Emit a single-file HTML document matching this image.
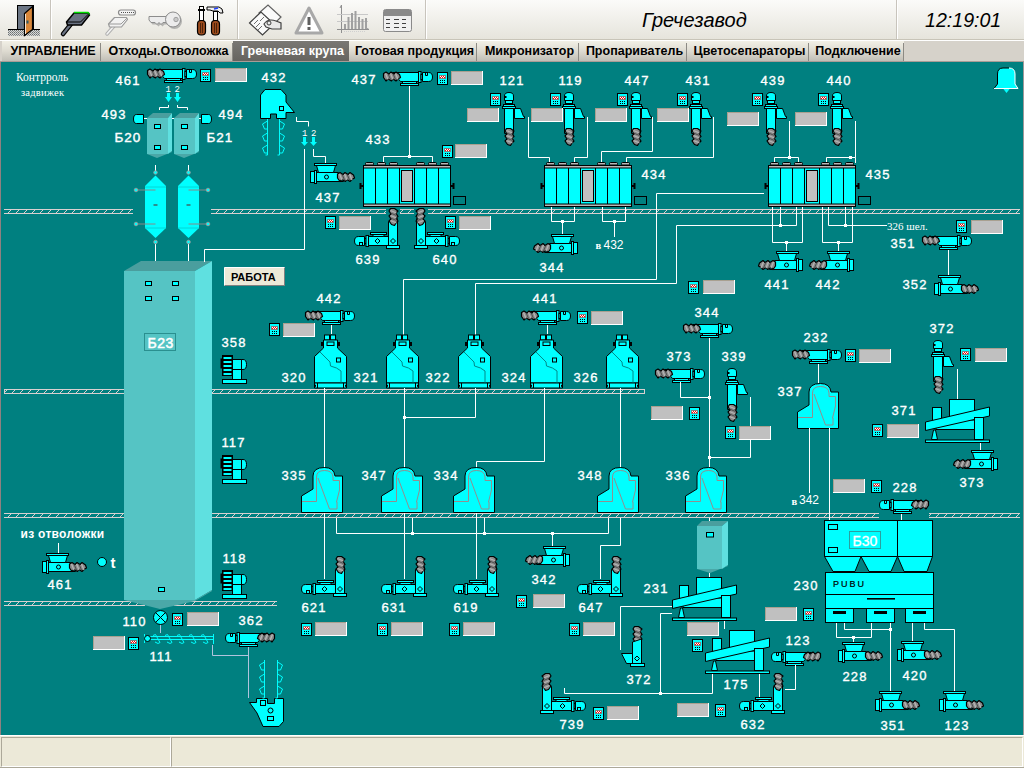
<!DOCTYPE html>
<html><head><meta charset="utf-8">
<style>
html,body{margin:0;padding:0;width:1024px;height:768px;overflow:hidden;background:#d4d0c8;}
#tb{position:absolute;left:0;top:0;width:1024px;height:39px;background:linear-gradient(#fbfbf9,#e6e4dc);}
#tbl{position:absolute;left:0;top:39px;width:1024px;height:1px;background:#c8c4b8;}
#tbl2{position:absolute;left:0;top:40px;width:1024px;height:1px;background:#fff;}
#title{position:absolute;left:642px;top:9px;font:italic 20px "Liberation Sans",sans-serif;color:#000;}
#clock{position:absolute;left:925px;top:8.5px;font:italic 19.6px "Liberation Sans",sans-serif;color:#000;}
#tabs{position:absolute;left:0;top:41px;width:1024px;height:21px;background:#d6d2ca;}
.tab{position:absolute;top:0;height:20px;background:linear-gradient(#f2f0e6,#dedbd1 50%,#c0beb6);box-sizing:border-box;padding-left:3px;
 font:bold 12.5px "Liberation Sans",sans-serif;color:#000;text-align:center;line-height:20px;white-space:nowrap;}
.tab::after{content:"";position:absolute;right:0;top:2px;width:1px;height:18px;background:#8c8a84;}
.tab.act{background:linear-gradient(#7a7874,#66645f);color:#fff;}
.tab.act::after{display:none;}
#main{position:absolute;left:1px;top:62px;width:1022px;height:673px;background:#008080;}
#lb{position:absolute;left:0;top:62px;width:1px;height:673px;background:#908080;}
#rb{position:absolute;left:1023px;top:62px;width:1px;height:673px;background:#a09898;}
#sb{position:absolute;left:0;top:735px;width:1024px;height:33px;background:#ece9d8;}
.pn{position:absolute;top:2px;height:30px;border-top:1px solid #aca899;border-left:1px solid #aca899;border-bottom:1px solid #fff;border-right:1px solid #fff;box-sizing:border-box;}

</style></head><body>
<div id="tb"></div><div id="tbl"></div><div id="tbl2"></div>

<svg width="1024" height="40" style="position:absolute;left:0;top:0">
 <defs>
  <pattern id="dither" width="2" height="2" patternUnits="userSpaceOnUse">
   <rect width="2" height="2" fill="#d8d8d8"/><rect width="1" height="1" fill="#6a7070"/><rect x="1" y="1" width="1" height="1" fill="#8a9090"/>
  </pattern>
 </defs>
 <!-- door -->
 <g shape-rendering="crispEdges">
  <rect x="8" y="29" width="32" height="7" fill="url(#dither)"/>
  <rect x="8" y="29" width="10" height="1" fill="#000"/><rect x="32" y="29" width="8" height="1" fill="#000"/>
  <rect x="17" y="5" width="17" height="25" fill="#000"/>
  <rect x="18" y="6" width="14" height="23" fill="#6b7584"/>
 </g>
 <path d="M24.5,13.5 L32.5,6.5 V29.5 L24.5,35.5 Z" fill="#d8873a" stroke="#000" stroke-width="1.2"/>
 <path d="M25.5,14 V34" stroke="#fff" stroke-width="0.8"/>
 <rect x="26.5" y="20.5" width="2" height="3" fill="#2a5a6a"/>
 <rect x="50" y="0" width="1" height="39" fill="#c8c4bc"/><rect x="51" y="0" width="1" height="39" fill="#fff"/>
 <!-- usb green -->
 <path d="M63,34 L71,24" stroke="#000" stroke-width="4.5" stroke-linecap="round"/>
 <path d="M63,34 L71,24" stroke="#6a7282" stroke-width="2.2" stroke-linecap="round"/>
 <path d="M66.5,22 L74,13 H88.5 L89.5,15 L81.5,25 H67.5 Z" fill="#6a7282" stroke="#000" stroke-width="1.5" stroke-linejoin="round"/>
 <path d="M74,12.5 H88 L89.5,14.5" stroke="#00e000" stroke-width="1.6" fill="none"/>
 <path d="M67,22 H80.5 L89,13.5" stroke="#000" stroke-width="1" fill="none"/>
 <!-- grey cable -->
 <path d="M107,34 L114,26" stroke="#b0b0b0" stroke-width="3.5" stroke-linecap="round"/>
 <path d="M107,34 L114,26" stroke="#f4f4f4" stroke-width="1.5" stroke-linecap="round"/>
 <path d="M108.5,24 L114.5,17.5 H126.5 L127.5,19.5 L121.5,27 H109.5 Z" fill="#f2f2f2" stroke="#9a9a9a" stroke-width="1.2" stroke-linejoin="round"/>
 <path d="M109,24 H121 L127,18" stroke="#9a9a9a" fill="none"/>
 <rect x="118.5" y="10" width="17" height="5" rx="2.5" fill="#f4f4f4" stroke="#8a8a8a" stroke-width="1.2"/>
 <path d="M121,12.5 h1 M123,12.5 h1 M125,12.5 h1 M127,12.5 h1 M129,12.5 h1 M131,12.5 h1 M133,12.5 h1" stroke="#505050"/>
 <!-- key -->
 <g transform="translate(1.5,2)" opacity="0.6">
  <path d="M149,16.5 H166 L168,14 V24 L166,22.5 H163 L161,24.5 L159,22.5 L157,24.5 L155,22.5 H151 L149,20 Z" fill="#909090"/>
  <circle cx="173" cy="19.5" r="7.5" fill="#909090"/>
 </g>
 <path d="M149,16.5 H166 L168,14 V24 L166,22.5 H163 L161,24.5 L159,22.5 L157,24.5 L155,22.5 H151 L149,20 Z" fill="#ececec" stroke="#8c8c8c"/>
 <circle cx="173" cy="19.5" r="7.5" fill="#ececec" stroke="#8c8c8c"/>
 <circle cx="176" cy="19.5" r="2.2" fill="#c8c8c8" stroke="#a0a0a0"/>
 <!-- tools -->
 <rect x="199.5" y="6.5" width="4" height="14" fill="#fff" stroke="#000"/>
 <rect x="198" y="9" width="7" height="2" fill="#000"/>
 <rect x="197.5" y="20.5" width="8" height="14.5" rx="3.5" fill="#9a4a1c" stroke="#000" stroke-width="1.2"/>
 <path d="M200.5,23 V33 M202.5,23 V33" stroke="#3a1a08" stroke-width="0.8"/>
 <path d="M207,7 H219 Q223,8 223,13 H220 L218,11 H213 L210,10 H207 Z" fill="#f0f0f0" stroke="#000"/>
 <path d="M214,9 L218,8" stroke="#2040ff" stroke-width="1.6"/>
 <rect x="213.5" y="11.5" width="4" height="9" fill="#fff" stroke="#000"/>
 <rect x="211.5" y="20.5" width="8" height="14.5" rx="3.5" fill="#9a4a1c" stroke="#000" stroke-width="1.2"/>
 <path d="M214.5,23 V33 M216.5,23 V33" stroke="#3a1a08" stroke-width="0.8"/>
 <rect x="237" y="0" width="1" height="39" fill="#c8c4bc"/><rect x="238" y="0" width="1" height="39" fill="#fff"/>
 <!-- doc/hand -->
 <path d="M259,13 L268,5 L281,17 L272,26 Z" fill="#fafafa" stroke="#606060" stroke-width="1.2"/>
 <path d="M249.5,23 L261,12 L274,24 L262.5,35 Z" fill="#fafafa" stroke="#404040" stroke-width="1.2"/>
 <path d="M254,24 L258,20 M256,27 L260,23 M258,30 L262,26 M260,21 L264,17" stroke="#707070" stroke-width="1"/>
 <path d="M264,24 Q268,18 276,21 L281,23 V29 L272,29 L266,27 Z" fill="#e8e8e8" stroke="#404040" stroke-width="1.2"/>
 <circle cx="269" cy="23" r="2" fill="none" stroke="#404040"/>
 <!-- warning -->
 <path d="M309,8 L322,33 H296 Z" fill="#ffffff" stroke="#a8a8a8" stroke-width="3" stroke-linejoin="round"/>
 <rect x="307.5" y="17" width="3" height="8" fill="#606060"/>
 <rect x="307.5" y="27" width="3" height="3" fill="#606060"/>
 <!-- chart -->
 <path d="M341.5,5 V33 M337,29.5 H369 M369,29.5 L366,28 M341.5,5 L340,8" stroke="#909090" fill="none"/>
 <path d="M337,14.5 H368 M337,21.5 H368" stroke="#c8c8c8" fill="none"/>
 <path d="M345,29 V24 M348.5,29 V17 M352,29 V13 M355.5,29 V11 M359,29 V17 M362.5,29 V19 M366,29 V18" stroke="#a0a0a0" stroke-width="2"/>
 <path d="M344,31.5 H366" stroke="#d0d0d0" stroke-dasharray="1,1"/>
 <!-- table -->
 <rect x="383.5" y="9.5" width="28" height="22" rx="2" fill="#f0f0f0" stroke="#8a8a8a"/>
 <rect x="384" y="10" width="27" height="6" fill="#8a8a8a"/>
 <path d="M386,19.5 H390 M394,19.5 H399 M402,19.5 H406 M386,23.5 H390 M394,23.5 H399 M402,23.5 H406 M386,27.5 H390 M394,27.5 H399 M402,27.5 H406" stroke="#404040" stroke-width="1"/>
 <rect x="425" y="0" width="1" height="39" fill="#c8c4bc"/><rect x="426" y="0" width="1" height="39" fill="#fff"/>
 <rect x="896" y="0" width="1" height="39" fill="#c8c4bc"/><rect x="897" y="0" width="1" height="39" fill="#fff"/>
</svg>

<div id="title">Гречезавод</div>
<div id="clock">12:19:01</div>
<div id="tabs">
<div class="tab" style="left:2px;width:99px">УПРАВЛЕНИЕ</div>
<div class="tab" style="left:101px;width:132px">Отходы.Отволожка</div>
<div class="tab act" style="left:233px;width:116px">Гречневая крупа</div>
<div class="tab" style="left:349px;width:128px">Готовая продукция</div>
<div class="tab" style="left:477px;width:102px">Микронизатор</div>
<div class="tab" style="left:579px;width:108px">Пропариватель</div>
<div class="tab" style="left:687px;width:122px">Цветосепараторы</div>
<div class="tab" style="left:809px;width:95px">Подключение</div>
</div>
<div id="main"></div><div style="position:absolute;left:0;top:61px;width:1024px;height:1px;background:#a89c96"></div><div id="lb"></div><div id="rb"></div>
<svg width="1024" height="768" style="position:absolute;left:0;top:0" shape-rendering="crispEdges">

<defs>
<pattern id="hatch" width="8" height="5" patternUnits="userSpaceOnUse">
  <rect x="0" y="0" width="8" height="1" fill="#d8d0d0"/>
  <rect x="0" y="4" width="8" height="1" fill="#d8d0d0"/>
  <rect x="2" y="1" width="1" height="1" fill="#d8d0d0"/><rect x="1" y="2" width="1" height="1" fill="#d8d0d0"/><rect x="0" y="3" width="1" height="1" fill="#d8d0d0"/>
</pattern>
<g id="spH">
  <path d="M0.5,2 L0.5,6 L3,9.5 L5,7.5 L8.5,9.5 L10,7.5 L13,9.5 L15,7.5 L17.5,6 L16.5,3 L13,0.5 L11,2.5 L8,0.5 L6,2.5 L3,0.5 Z" fill="#8a8a8a" stroke="#000" stroke-width="1.2" stroke-linejoin="round"/>
  <path d="M2.5,2 L5,8 M7.5,2 L10,8 M12.5,2 L15,8" stroke="#b4b4b4" stroke-width="1.3" fill="none"/>
  <path d="M5,2 L7.5,8 M10,2 L12.5,8" stroke="#303030" stroke-width="0.7" fill="none"/>
</g>
<g id="spV">
  <path d="M2,0.5 L6,0.5 L9.5,3 L7.5,5 L9.5,8.5 L7.5,10 L9.5,13 L7.5,15 L6,17.5 L3,16.5 L0.5,13 L2.5,11 L0.5,8 L2.5,6 L0.5,3 Z" fill="#8a8a8a" stroke="#000" stroke-width="1.2" stroke-linejoin="round"/>
  <path d="M2,2.5 L8,5 M2,7.5 L8,10 M2,12.5 L8,15" stroke="#b4b4b4" stroke-width="1.3" fill="none"/>
  <path d="M2,5 L8,7.5 M2,10 L8,12.5" stroke="#303030" stroke-width="0.7" fill="none"/>
</g>
<g id="scA" stroke="#000" stroke-width="1">
  <path d="M9.5,1.5 H35.5 V10.5 H17.5 L14.5,7 Z" fill="#0ff"/>
  <use href="#spH" x="0" y="0.5"/>
  <rect x="35.5" y="0.5" width="2.5" height="11" fill="#0ff"/>
  <rect x="38" y="3.5" width="1.5" height="5" fill="#0ff"/>
  <path d="M39.5,1.5 H45.5 Q49.5,1.5 49.5,6 Q49.5,10.5 45.5,10.5 H39.5 Z" fill="#0ff"/>
  <path d="M42.5,1.5 V4.5 H44.5 V1.5" fill="none"/>
  <path d="M20.5,10.5 H32.5 L34.5,12.5 H18.5 Z" fill="#0ff"/>
  <rect x="17.5" y="12.5" width="18" height="2" fill="#0ff"/>
</g>
<g id="scB" stroke="#000" stroke-width="1">
  <path d="M6.5,9.5 H28.5 L33.5,18.5 H6.5 Z" fill="#0ff"/>
  <use href="#spH" x="27" y="9"/>
  <path d="M6.5,2.5 H25.5 L23.5,9.5 H8.5 Z" fill="#0ff"/>
  <rect x="4.5" y="0.5" width="22" height="2" fill="#0ff"/>
  <rect x="0.5" y="8.5" width="4" height="11" fill="#0ff"/>
  <rect x="4.5" y="7.5" width="2" height="13" fill="#0ff"/>
  <circle cx="16.5" cy="14" r="2" fill="#0ff"/>
</g>
<g id="elC" stroke="#000" stroke-width="1">
  <path d="M2.5,8.5 V4 Q2.5,0.5 7,0.5 Q11.5,0.5 11.5,4 V8.5 Z" fill="#0ff"/>
  <rect x="2.5" y="4" width="2" height="2" fill="#000" stroke="none"/>
  <rect x="3.5" y="8.5" width="7" height="3" fill="#0ff"/>
  <rect x="1.5" y="12.5" width="11" height="2" fill="#0ff"/>
  <rect x="0.5" y="14.5" width="13" height="2" fill="#0ff"/>
  <path d="M12.5,16.5 H18.5 L21.5,24.5 H22.5 V26.5 H12.5 Z" fill="#0ff"/>
  <path d="M2.5,16.5 H11.5 V41.5 H2.5 Z" fill="#0ff"/>
  <use href="#spV" x="2.5" y="36"/>
</g>
<g id="scD" stroke="#000" stroke-width="1">
  <path d="M4.5,28.5 H10.5 V37.5 H4.5 Q0.5,37.5 0.5,33 Q0.5,28.5 4.5,28.5 Z" fill="#0ff"/>
  <rect x="5.5" y="34.5" width="3" height="3" fill="none"/>
  <rect x="10.5" y="30.5" width="1.5" height="5" fill="#0ff"/>
  <rect x="12" y="27.5" width="2.5" height="11" fill="#0ff"/>
  <rect x="14.5" y="28.5" width="20" height="9" fill="#0ff"/>
  <path d="M18.5,26.5 H30.5 L29.5,28.5 H19.5 Z" fill="#0ff"/>
  <rect x="16.5" y="24.5" width="16" height="2" fill="#0ff"/>
  <path d="M23.5,30.5 L26,33 L23.5,35.5 L21,33 Z" fill="none"/>
  <path d="M34.5,37.5 V13.5 L43.5,10.5 V37.5 Z" fill="#0ff"/>
  <path d="M39,30.5 L41.5,33 L39,35.5 L36.5,33 Z" fill="none"/>
  <rect x="32.5" y="37.5" width="13" height="3" fill="#0ff"/>
  <use href="#spV" x="34.5" y="0"/>
</g>
<g id="mon" shape-rendering="crispEdges">
  <rect x="0" y="0" width="11" height="13" fill="#000"/>
  <rect x="1" y="1" width="9" height="11" fill="#0ff"/>
  <rect x="2" y="3" width="7" height="4" fill="#808080"/>
  <rect x="3" y="4" width="5" height="2" fill="#ff0000"/>
  <rect x="3" y="4" width="1" height="1" fill="#fff"/><rect x="5" y="4" width="1" height="1" fill="#fff"/><rect x="7" y="4" width="1" height="1" fill="#fff"/>
  <rect x="4" y="5" width="1" height="1" fill="#fff"/><rect x="6" y="5" width="1" height="1" fill="#fff"/>
  <g fill="#000"><rect x="3" y="8" width="1" height="1"/><rect x="5" y="8" width="1" height="1"/><rect x="7" y="8" width="1" height="1"/>
  <rect x="3" y="10" width="1" height="1"/><rect x="5" y="10" width="1" height="1"/><rect x="7" y="10" width="1" height="1"/></g>
</g>
<g id="gbox" shape-rendering="crispEdges">
  <rect x="0" y="0" width="32" height="14" fill="#fff"/>
  <rect x="0" y="0" width="31" height="13" fill="#a8a090"/>
  <rect x="1" y="1" width="30" height="12" fill="#c0c0c0"/>
</g>
<g id="machE" stroke="#000" stroke-width="1">
  <g fill="#b8b8b8">
   <rect x="2.5" y="-0.5" width="8" height="2.5" rx="1"/><rect x="14.5" y="-0.5" width="8" height="2.5" rx="1"/><rect x="26.5" y="-0.5" width="8" height="2.5" rx="1"/>
   <rect x="53.5" y="-0.5" width="8" height="2.5" rx="1"/><rect x="65.5" y="-0.5" width="8" height="2.5" rx="1"/><rect x="77.5" y="-0.5" width="8" height="2.5" rx="1"/>
  </g>
  <rect x="0.5" y="2.5" width="87" height="41" fill="#0ff"/>
  <rect x="0.5" y="2.5" width="87" height="2.5" fill="#b8b8b8"/>
  <rect x="0.5" y="41" width="87" height="2.5" fill="#b8b8b8"/>
  <path d="M12.5,5 V41 M24.5,5 V41 M36.5,5 V41 M51.5,5 V41 M63.5,5 V41 M75.5,5 V41" fill="none"/>
  <rect x="38.5" y="7.5" width="11" height="31" fill="#c0c0c0"/>
  <path d="M-2.5,20 V26 M-3.5,23 H0" stroke-width="2"/>
  <path d="M90.5,20 V26 M88,23 H91.5" stroke-width="2"/>
  <rect x="90.5" y="33.5" width="12" height="8" fill="none"/>
</g>
<g id="binF" stroke="#000" stroke-width="1">
  <rect x="10.5" y="0.5" width="5" height="5" fill="#0ff"/><rect x="16.5" y="0.5" width="5" height="5" fill="#0ff"/>
  <rect x="7.5" y="8" width="2" height="3" fill="#000"/><rect x="23.5" y="8" width="2" height="3" fill="#000"/>
  <path d="M9.5,5.5 H23.5 V13.5 L32.5,22 V48.5 H0.5 V22 L9.5,13.5 Z" fill="#0ff"/>
  <rect x="13" y="7.5" width="7" height="3.5" fill="none"/>
  <path d="M0.5,48.5 H32.5 V53.5 H0.5 Z" fill="#0ff"/>
  <path d="M3.5,48.5 V53.5 M29.5,48.5 V53.5" fill="none"/>
  <path d="M0.5,50.5 H1.5 V52 H0.5 M32.5,50.5 H31.5 V52 H32.5" fill="#000"/>
  <rect x="22.5" y="23.5" width="4" height="4" fill="none"/>
  <path d="M6,17.5 L16,27.5 L16.5,31.5 L22.5,33.5 L27,36.5 V48" stroke="#008a8a" fill="none"/>
</g>
<g id="sepG">
  <path d="M0.5,45.5 V29 L12,22 V9 Q12,0.5 23.5,0.5 Q33,0.5 34,9 H41.5 V45.5 Z" fill="#0ff" stroke="#000" stroke-width="1"/>
  <path d="M1,34.5 H15.5 V10 Q15.5,3.5 23.5,3.5 Q31.5,3.5 32,10 V13.5 H38.5 V23 L35.5,35 H36 V42 H28.5 L17,11" fill="none" stroke="#909090" stroke-width="1"/>
</g>
<g id="fan" stroke="#000" stroke-width="1">
  <rect x="1.5" y="0.5" width="10" height="20" fill="#000"/>
  <g fill="#0ff" stroke="none"><rect x="2.5" y="2" width="8" height="2"/><rect x="2.5" y="6" width="8" height="2"/><rect x="2.5" y="10" width="8" height="2"/><rect x="2.5" y="14" width="8" height="2"/><rect x="2.5" y="18" width="8" height="2"/></g>
  <rect x="0" y="4" width="1.5" height="9" fill="#000"/>
  <rect x="11.5" y="4.5" width="9" height="10" fill="#0ff"/>
  <path d="M20.5,4.5 H22 Q25.5,4.5 25.5,9.5 Q25.5,14.5 22,14.5 H20.5 Z" fill="#0ff"/>
  <rect x="11.5" y="14.5" width="9" height="10" fill="#0ff"/>
  <rect x="1.5" y="24.5" width="24" height="4" fill="#0ff"/>
</g>
<g id="tilt" stroke="#000" stroke-width="1">
  <rect x="24.5" y="0.5" width="25" height="30" fill="#0ff"/>
  <rect x="7.5" y="8.5" width="9" height="13" fill="#0ff"/>
  <rect x="11" y="21" width="38.5" height="9.5" fill="#0ff"/>
  <path d="M0.5,23 L64.5,8 V17 L0.5,31.5 Z" fill="#0ff"/>
  <rect x="49.5" y="18.5" width="9" height="22" fill="#0ff"/>
  <path d="M6.5,40.5 L8.5,31 H10.5 L12.5,40.5 Z" fill="#0ff"/>
  <rect x="0.5" y="41" width="64" height="2.5" fill="#0ff"/>
</g>
</defs>

<g shape-rendering="auto">
<g transform="translate(0,209)" shape-rendering="crispEdges"><rect x="4" y="0" width="129" height="5" fill="url(#hatch)"/></g>
<g transform="translate(0,209)" shape-rendering="crispEdges"><rect x="211" y="0" width="175" height="5" fill="url(#hatch)"/></g>
<g transform="translate(0,209)" shape-rendering="crispEdges"><rect x="400" y="0" width="14" height="5" fill="url(#hatch)"/></g>
<g transform="translate(0,209)" shape-rendering="crispEdges"><rect x="428" y="0" width="592" height="5" fill="url(#hatch)"/></g>
<g transform="translate(4,389)" shape-rendering="crispEdges"><rect x="0" y="0" width="120" height="5" fill="url(#hatch)"/><rect x="0" y="0" width="1" height="5" fill="#d8d0d0"/></g>
<g transform="translate(4,389)" shape-rendering="crispEdges"><rect x="208" y="0" width="433" height="5" fill="url(#hatch)"/><rect x="640" y="0" width="1" height="5" fill="#d8d0d0"/></g>
<g transform="translate(0,513)" shape-rendering="crispEdges"><rect x="4" y="0" width="120" height="5" fill="url(#hatch)"/></g>
<g transform="translate(0,513)" shape-rendering="crispEdges"><rect x="212" y="0" width="667" height="5" fill="url(#hatch)"/></g>
<g transform="translate(0,513)" shape-rendering="crispEdges"><rect x="929" y="0" width="91" height="5" fill="url(#hatch)"/></g>
<g transform="translate(0,601)" shape-rendering="crispEdges"><rect x="4" y="0" width="141" height="5" fill="url(#hatch)"/></g>
<g transform="translate(0,601)" shape-rendering="crispEdges"><rect x="174" y="0" width="103" height="5" fill="url(#hatch)"/></g>
<path d="M124,271 L141,261 H212 L195,271 Z" fill="#4a9e9e"/>
<rect x="124" y="271" width="71" height="329" fill="#55c4c4"/>
<path d="M195,271 L212,261 V590 L195,600 Z" fill="#5fe0e0"/>
<path d="M124,600 H195 L212,590 V591 L195,601 L160,609 Z" fill="#4aa8a8"/>
<rect x="145.5" y="281.5" width="6" height="4" fill="#0ff" stroke="#000"/>
<rect x="172.5" y="281.5" width="6" height="4" fill="#0ff" stroke="#000"/>
<rect x="145.5" y="296.5" width="6" height="4" fill="#0ff" stroke="#000"/>
<rect x="172.5" y="296.5" width="6" height="4" fill="#0ff" stroke="#000"/>
<rect x="158.5" y="587.5" width="6" height="4" fill="#0ff" stroke="#000"/>
<rect x="144.5" y="333.5" width="31" height="17" fill="none" stroke="#2a8f8f"/>
<text x="147.5" y="347.5" font-family="Liberation Sans" font-size="14" font-weight="normal" fill="#fff" letter-spacing="0.5" stroke="#fff" stroke-width="0.5">Б23</text>
<text x="16" y="81" font-family="Liberation Serif" font-size="11.5" fill="#fff">Контрроль</text>
<text x="21" y="95.5" font-family="Liberation Serif" font-size="10.5" fill="#fff" letter-spacing="0.2">задвижек</text>
<text x="115.4" y="85.3" font-family="Liberation Sans" font-size="13" font-weight="normal" fill="#fff" letter-spacing="1.2" stroke="#fff" stroke-width="0.35">461</text>
<use href="#scA" transform="translate(147,68)"/>
<use href="#mon" transform="translate(200,69)"/>
<use href="#gbox" transform="translate(215,68)"/>
<text x="165.5" y="92" font-family="Liberation Mono" font-size="9" fill="#fff">1</text>
<text x="174.5" y="92" font-family="Liberation Mono" font-size="9" fill="#fff">2</text>
<path d="M167,93 H170 V97 H172 L168.5,102 L165,97 H167 Z" fill="#0ff"/>
<path d="M176,93 H179 V97 H181 L177.5,102 L174,97 H176 Z" fill="#0ff"/>
<path d="M159.5,110 L159.5,107.5 L168.5,107.5 L168.5,105" stroke="#fff" stroke-width="1" fill="none"/>
<path d="M177.5,105 L177.5,107.5 L187.5,107.5 L187.5,110" stroke="#fff" stroke-width="1" fill="none"/>
<text x="101.4" y="119.3" font-family="Liberation Sans" font-size="13" font-weight="normal" fill="#fff" letter-spacing="1.2" stroke="#fff" stroke-width="0.35">493</text>
<text x="218.4" y="119.3" font-family="Liberation Sans" font-size="13" font-weight="normal" fill="#fff" letter-spacing="1.2" stroke="#fff" stroke-width="0.35">494</text>
<text x="114.5" y="142.3" font-family="Liberation Sans" font-size="13.5" font-weight="normal" fill="#fff" letter-spacing="1" stroke="#fff" stroke-width="0.4">Б20</text>
<text x="206.5" y="142.3" font-family="Liberation Sans" font-size="13.5" font-weight="normal" fill="#fff" letter-spacing="1" stroke="#fff" stroke-width="0.4">Б21</text>
<path d="M143,118.5 H147" stroke="#fff" stroke-width="1" fill="none"/>
<path d="M168,118.5 H174" stroke="#fff" stroke-width="1" fill="none"/>
<path d="M195,118.5 H201" stroke="#fff" stroke-width="1" fill="none"/>
<path d="M147,118 L153,113 H172 L168,118 Z" fill="#4a9e9e"/>
<rect x="147" y="118" width="21" height="36" fill="#55c4c4"/>
<path d="M168,118 L172,113 V151 L168,154 Z" fill="#5fe0e0"/>
<path d="M147,154 H168 L172,151 V152 L157,158 Z" fill="#4aa8a8"/>
<rect x="154.5" y="124.5" width="6" height="4" fill="#0ff" stroke="#000"/>
<rect x="154.5" y="145.5" width="6" height="4" fill="#0ff" stroke="#000"/>
<path d="M174,118 L180,113 H199 L195,118 Z" fill="#4a9e9e"/>
<rect x="174" y="118" width="21" height="36" fill="#55c4c4"/>
<path d="M195,118 L199,113 V151 L195,154 Z" fill="#5fe0e0"/>
<path d="M174,154 H195 L199,151 V152 L184,158 Z" fill="#4aa8a8"/>
<rect x="181.5" y="124.5" width="6" height="4" fill="#0ff" stroke="#000"/>
<rect x="181.5" y="145.5" width="6" height="4" fill="#0ff" stroke="#000"/>
<path d="M136.5,114.5 H143.5 V123.5 H136.5 Q133.5,123.5 133.5,119 Q133.5,114.5 136.5,114.5 Z" fill="#0ff" stroke="#000"/>
<path d="M208.5,114.5 H201.5 V123.5 H208.5 Q211.5,123.5 211.5,119 Q211.5,114.5 208.5,114.5 Z" fill="#0ff" stroke="#000"/>
<path d="M155.5,165 V171" stroke="#fff" stroke-width="1" fill="none"/>
<path d="M155.5,244 V261" stroke="#fff" stroke-width="1" fill="none"/>
<path d="M145,186 L155.5,175.5 L166,186 V228 L155.5,238 L145,228 Z" fill="#0ff"/>
<path d="M145,187 H166 M145,228 H166" stroke="#00d8d8" stroke-width="1"/>
<path d="M136.0,190 H155.5" stroke="#888" stroke-width="1"/>
<circle cx="136.0" cy="190" r="1.8" fill="#0ff" stroke="#aa9a9a" stroke-width="0.8"/>
<path d="M136.0,224 H155.5" stroke="#888" stroke-width="1"/>
<circle cx="136.0" cy="224" r="1.8" fill="#0ff" stroke="#aa9a9a" stroke-width="0.8"/>
<circle cx="155.5" cy="172.5" r="1.8" fill="#0ff" stroke="#aa9a9a" stroke-width="0.8"/>
<circle cx="155.5" cy="242" r="1.8" fill="#0ff" stroke="#aa9a9a" stroke-width="0.8"/>
<rect x="153.5" y="204" width="4" height="2" fill="#2a8f8f"/>
<path d="M188.5,165 V171" stroke="#fff" stroke-width="1" fill="none"/>
<path d="M188.5,244 V261" stroke="#fff" stroke-width="1" fill="none"/>
<path d="M178,186 L188.5,175.5 L199,186 V228 L188.5,238 L178,228 Z" fill="#0ff"/>
<path d="M178,187 H199 M178,228 H199" stroke="#00d8d8" stroke-width="1"/>
<path d="M208.0,190 H188.5" stroke="#888" stroke-width="1"/>
<circle cx="208.0" cy="190" r="1.8" fill="#0ff" stroke="#aa9a9a" stroke-width="0.8"/>
<path d="M208.0,224 H188.5" stroke="#888" stroke-width="1"/>
<circle cx="208.0" cy="224" r="1.8" fill="#0ff" stroke="#aa9a9a" stroke-width="0.8"/>
<circle cx="188.5" cy="172.5" r="1.8" fill="#0ff" stroke="#aa9a9a" stroke-width="0.8"/>
<circle cx="188.5" cy="242" r="1.8" fill="#0ff" stroke="#aa9a9a" stroke-width="0.8"/>
<rect x="186.5" y="204" width="4" height="2" fill="#2a8f8f"/>
<text x="261.4" y="82.3" font-family="Liberation Sans" font-size="13" font-weight="normal" fill="#fff" letter-spacing="1.2" stroke="#fff" stroke-width="0.35">432</text>
<path d="M260.5,118.5 V95 L265,89.5 H281 L286,95 V102 L294.5,112.5 H286 V118.5 H276.5 V114 H270.5 V118.5 Z" fill="#0ff" stroke="#000"/>
<rect x="279.5" y="106.5" width="4" height="4" fill="none" stroke="#000"/>
<path d="M267.5,119 V155" stroke="#0ff" stroke-width="1" fill="none"/><path d="M279.5,119 V155" stroke="#0ff" stroke-width="1" fill="none"/><path d="M267.5,121 L262.5,124 L264.5,129 H267.5" stroke="#0ff" fill="none" stroke-width="1"/><path d="M279.5,121 L284.5,124 L282.5,129 H279.5" stroke="#0ff" fill="none" stroke-width="1"/><path d="M267.5,133 L262.5,136 L264.5,141 H267.5" stroke="#0ff" fill="none" stroke-width="1"/><path d="M279.5,133 L284.5,136 L282.5,141 H279.5" stroke="#0ff" fill="none" stroke-width="1"/><path d="M267.5,145 L262.5,148 L264.5,153 H267.5" stroke="#0ff" fill="none" stroke-width="1"/><path d="M279.5,145 L284.5,148 L282.5,153 H279.5" stroke="#0ff" fill="none" stroke-width="1"/><path d="M265.5,155 H267.5" stroke="#0ff" stroke-width="1" fill="none"/><path d="M277.5,155 H279.5" stroke="#0ff" stroke-width="1" fill="none"/>
<path d="M296.5,117 L296.5,121.5 L308.5,121.5 L308.5,126.5" stroke="#fff" stroke-width="1" fill="none"/>
<text x="302" y="136" font-family="Liberation Mono" font-size="9" fill="#fff">1</text>
<text x="311" y="136" font-family="Liberation Mono" font-size="9" fill="#fff">2</text>
<path d="M303,137 H306 V142 H308 L304.5,146 L301,142 H303 Z" fill="#0ff"/>
<path d="M312,137 H315 V142 H317 L313.5,146 L310,142 H312 Z" fill="#0ff"/>
<path d="M304.5,149 L304.5,249.5 L204.5,249.5 L204.5,262" stroke="#fff" stroke-width="1" fill="none"/>
<path d="M313.5,149 L313.5,156.5 L325.5,156.5 L325.5,163" stroke="#fff" stroke-width="1" fill="none"/>
<use href="#scB" transform="translate(310,163)"/>
<text x="315.4" y="202.3" font-family="Liberation Sans" font-size="13" font-weight="normal" fill="#fff" letter-spacing="1.2" stroke="#fff" stroke-width="0.35">437</text>
<text x="351.4" y="84.3" font-family="Liberation Sans" font-size="13" font-weight="normal" fill="#fff" letter-spacing="1.2" stroke="#fff" stroke-width="0.35">437</text>
<use href="#scA" transform="translate(383,71)"/>
<use href="#mon" transform="translate(437,72)"/>
<use href="#gbox" transform="translate(451,71)"/>
<path d="M409.5,86 V156.5" stroke="#fff" stroke-width="1" fill="none"/>
<path d="M383.5,163 L383.5,156.5 L432.5,156.5 L432.5,163" stroke="#fff" stroke-width="1" fill="none"/>
<rect x="408.0" y="155.0" width="3" height="3" fill="#fff"/>
<text x="365.4" y="144.3" font-family="Liberation Sans" font-size="13" font-weight="normal" fill="#fff" letter-spacing="1.2" stroke="#fff" stroke-width="0.35">433</text>
<use href="#mon" transform="translate(442,145)"/>
<use href="#gbox" transform="translate(455,144)"/>
<use href="#machE" transform="translate(363,163)"/>
<use href="#scD" transform="translate(354,208)"/>
<use href="#scD" transform="translate(460,208) scale(-1,1)"/>
<use href="#mon" transform="translate(325,216)"/>
<use href="#gbox" transform="translate(339,216)"/>
<use href="#mon" transform="translate(445,216)"/>
<use href="#gbox" transform="translate(459,216)"/>
<text x="355.4" y="264.3" font-family="Liberation Sans" font-size="13" font-weight="normal" fill="#fff" letter-spacing="1.2" stroke="#fff" stroke-width="0.35">639</text>
<text x="432.4" y="264.3" font-family="Liberation Sans" font-size="13" font-weight="normal" fill="#fff" letter-spacing="1.2" stroke="#fff" stroke-width="0.35">640</text>
<text x="499.4" y="85.3" font-family="Liberation Sans" font-size="13" font-weight="normal" fill="#fff" letter-spacing="1.2" stroke="#fff" stroke-width="0.35">121</text>
<use href="#elC" transform="translate(502,92)"/>
<use href="#mon" transform="translate(490,93)"/>
<use href="#gbox" transform="translate(467,108)"/>
<text x="558.4" y="85.3" font-family="Liberation Sans" font-size="13" font-weight="normal" fill="#fff" letter-spacing="1.2" stroke="#fff" stroke-width="0.35">119</text>
<use href="#elC" transform="translate(562,92)"/>
<use href="#mon" transform="translate(550,93)"/>
<use href="#gbox" transform="translate(531,108)"/>
<text x="624.4" y="85.3" font-family="Liberation Sans" font-size="13" font-weight="normal" fill="#fff" letter-spacing="1.2" stroke="#fff" stroke-width="0.35">447</text>
<use href="#elC" transform="translate(629,92)"/>
<use href="#mon" transform="translate(617,93)"/>
<use href="#gbox" transform="translate(595,108)"/>
<text x="685.4" y="85.3" font-family="Liberation Sans" font-size="13" font-weight="normal" fill="#fff" letter-spacing="1.2" stroke="#fff" stroke-width="0.35">431</text>
<use href="#elC" transform="translate(689,92)"/>
<use href="#mon" transform="translate(677,93)"/>
<use href="#gbox" transform="translate(657,108)"/>
<text x="760.4" y="85.3" font-family="Liberation Sans" font-size="13" font-weight="normal" fill="#fff" letter-spacing="1.2" stroke="#fff" stroke-width="0.35">439</text>
<use href="#elC" transform="translate(764,92)"/>
<use href="#mon" transform="translate(752,93)"/>
<use href="#gbox" transform="translate(727,112)"/>
<text x="826.4" y="85.3" font-family="Liberation Sans" font-size="13" font-weight="normal" fill="#fff" letter-spacing="1.2" stroke="#fff" stroke-width="0.35">440</text>
<use href="#elC" transform="translate(830,92)"/>
<use href="#mon" transform="translate(818,93)"/>
<use href="#gbox" transform="translate(795,112)"/>
<path d="M528.5,117 L528.5,157.5 L549.5,157.5 L549.5,163" stroke="#fff" stroke-width="1" fill="none"/>
<path d="M587.5,117 L587.5,157.5 L574.5,157.5 L574.5,163" stroke="#fff" stroke-width="1" fill="none"/>
<path d="M652.5,117 L652.5,151.5 L601.5,151.5 L601.5,163" stroke="#fff" stroke-width="1" fill="none"/>
<path d="M713.5,117 L713.5,157.5 L626.5,157.5 L626.5,163" stroke="#fff" stroke-width="1" fill="none"/>
<path d="M789.5,121 L789.5,157.5" stroke="#fff" stroke-width="1" fill="none"/>
<path d="M774.5,163 L774.5,157.5 L798.5,157.5 L798.5,163" stroke="#fff" stroke-width="1" fill="none"/>
<rect x="788.0" y="156.0" width="3" height="3" fill="#fff"/>
<path d="M855.5,121 L855.5,157.5" stroke="#fff" stroke-width="1" fill="none"/>
<path d="M826.5,163 L826.5,157.5 L855.5,157.5 L855.5,163" stroke="#fff" stroke-width="1" fill="none"/>
<rect x="849.0" y="156.0" width="3" height="3" fill="#fff"/>
<use href="#machE" transform="translate(544,163)"/>
<text x="641.4" y="179.3" font-family="Liberation Sans" font-size="13" font-weight="normal" fill="#fff" letter-spacing="1.2" stroke="#fff" stroke-width="0.35">434</text>
<use href="#machE" transform="translate(768,163)"/>
<text x="865.4" y="179.3" font-family="Liberation Sans" font-size="13" font-weight="normal" fill="#fff" letter-spacing="1.2" stroke="#fff" stroke-width="0.35">435</text>
<path d="M551.5,207 L551.5,221.5 L574.5,221.5 L574.5,207" stroke="#fff" stroke-width="1" fill="none"/>
<path d="M562.5,221.5 V234" stroke="#fff" stroke-width="1" fill="none"/>
<rect x="561.0" y="220.0" width="3" height="3" fill="#fff"/>
<path d="M602.5,207 L602.5,221.5 L625.5,221.5 L625.5,207" stroke="#fff" stroke-width="1" fill="none"/>
<path d="M614.5,221.5 V237" stroke="#fff" stroke-width="1" fill="none"/>
<rect x="613.0" y="220.0" width="3" height="3" fill="#fff"/>
<use href="#scB" transform="translate(578,234) scale(-1,1)"/>
<text x="539.4" y="272.3" font-family="Liberation Sans" font-size="13" font-weight="normal" fill="#fff" letter-spacing="1.2" stroke="#fff" stroke-width="0.35">344</text>
<text x="595.5" y="248.5" font-family="Liberation Serif" font-size="10.5" font-weight="bold" fill="#fff">в</text>
<text x="603.5" y="249" font-family="Liberation Sans" font-size="12" font-weight="normal" fill="#fff" >432</text>
<path d="M764,193.5 L656.5,193.5 L656.5,279.5 L403.5,279.5 L403.5,335" stroke="#fff" stroke-width="1" fill="none"/>
<path d="M796.5,207 L796.5,225.5 L676.5,225.5 L676.5,283.5 L475.5,283.5 L475.5,335" stroke="#fff" stroke-width="1" fill="none"/>
<path d="M780.5,207 V225.5" stroke="#fff" stroke-width="1" fill="none"/>
<rect x="779.0" y="224.0" width="3" height="3" fill="#fff"/>
<path d="M772.5,207 L772.5,242.5 L802.5,242.5 L802.5,207" stroke="#fff" stroke-width="1" fill="none"/>
<path d="M786.5,242.5 V251" stroke="#fff" stroke-width="1" fill="none"/>
<rect x="785.0" y="241.0" width="3" height="3" fill="#fff"/>
<path d="M822.5,207 L822.5,242.5 L852.5,242.5 L852.5,207" stroke="#fff" stroke-width="1" fill="none"/>
<path d="M838.5,242.5 V251" stroke="#fff" stroke-width="1" fill="none"/>
<rect x="837.0" y="241.0" width="3" height="3" fill="#fff"/>
<path d="M828.5,207 L828.5,225.5 L887,225.5" stroke="#fff" stroke-width="1" fill="none"/>
<path d="M845.5,207 V225.5" stroke="#fff" stroke-width="1" fill="none"/>
<rect x="844.0" y="224.0" width="3" height="3" fill="#fff"/>
<text x="887" y="229.5" font-family="Liberation Serif" font-size="11" fill="#fff">326 шел.</text>
<use href="#scB" transform="translate(803,251) scale(-1,1)"/>
<use href="#scB" transform="translate(854,251) scale(-1,1)"/>
<text x="764.4" y="289.3" font-family="Liberation Sans" font-size="13" font-weight="normal" fill="#fff" letter-spacing="1.2" stroke="#fff" stroke-width="0.35">441</text>
<text x="815.4" y="289.3" font-family="Liberation Sans" font-size="13" font-weight="normal" fill="#fff" letter-spacing="1.2" stroke="#fff" stroke-width="0.35">442</text>
<text x="890.4" y="248.3" font-family="Liberation Sans" font-size="13" font-weight="normal" fill="#fff" letter-spacing="1.2" stroke="#fff" stroke-width="0.35">351</text>
<use href="#scA" transform="translate(922,235)"/>
<use href="#mon" transform="translate(956,220)"/>
<use href="#gbox" transform="translate(971,220)"/>
<path d="M948.5,250 V275" stroke="#fff" stroke-width="1" fill="none"/>
<use href="#scB" transform="translate(934,275)"/>
<text x="902.4" y="289.3" font-family="Liberation Sans" font-size="13" font-weight="normal" fill="#fff" letter-spacing="1.2" stroke="#fff" stroke-width="0.35">352</text>
<path d="M997.5,84 V74 Q997.5,68 1003,68 H1009 Q1015,68 1015,74 V84 L1018,88.5 H1010 L1006.5,93 L1003,88.5 H994 Z" fill="#0ff"/>
<path d="M994,88.5 L997.5,84 V74 Q997.5,68 1003,68 H1009" stroke="#000" fill="none"/>
<path d="M1009,68 Q1015,68 1015,74 V84 L1018,88.5 H994" stroke="#fff" fill="none"/>
<text x="316.4" y="303.3" font-family="Liberation Sans" font-size="13" font-weight="normal" fill="#fff" letter-spacing="1.2" stroke="#fff" stroke-width="0.35">442</text>
<use href="#scA" transform="translate(305,310)"/>
<use href="#mon" transform="translate(269,323)"/>
<use href="#gbox" transform="translate(283,323)"/>
<path d="M331.5,325 V334" stroke="#fff" stroke-width="1" fill="none"/>
<text x="532.4" y="303.3" font-family="Liberation Sans" font-size="13" font-weight="normal" fill="#fff" letter-spacing="1.2" stroke="#fff" stroke-width="0.35">441</text>
<use href="#scA" transform="translate(521,310)"/>
<use href="#mon" transform="translate(577,311)"/>
<use href="#gbox" transform="translate(591,311)"/>
<path d="M547.5,325 V334" stroke="#fff" stroke-width="1" fill="none"/>
<use href="#binF" transform="translate(314,334.5)"/>
<use href="#binF" transform="translate(386,334.5)"/>
<use href="#binF" transform="translate(458,334.5)"/>
<use href="#binF" transform="translate(530,334.5)"/>
<use href="#binF" transform="translate(606,334.5)"/>
<text x="281.4" y="382.3" font-family="Liberation Sans" font-size="13" font-weight="normal" fill="#fff" letter-spacing="1.2" stroke="#fff" stroke-width="0.35">320</text>
<text x="353.4" y="382.3" font-family="Liberation Sans" font-size="13" font-weight="normal" fill="#fff" letter-spacing="1.2" stroke="#fff" stroke-width="0.35">321</text>
<text x="425.4" y="382.3" font-family="Liberation Sans" font-size="13" font-weight="normal" fill="#fff" letter-spacing="1.2" stroke="#fff" stroke-width="0.35">322</text>
<text x="501.4" y="382.3" font-family="Liberation Sans" font-size="13" font-weight="normal" fill="#fff" letter-spacing="1.2" stroke="#fff" stroke-width="0.35">324</text>
<text x="573.4" y="382.3" font-family="Liberation Sans" font-size="13" font-weight="normal" fill="#fff" letter-spacing="1.2" stroke="#fff" stroke-width="0.35">326</text>
<path d="M324.5,388 V467" stroke="#fff" stroke-width="1" fill="none"/>
<path d="M404.5,388 V467" stroke="#fff" stroke-width="1" fill="none"/>
<path d="M475.5,388 L475.5,417.5 L404.5,417.5" stroke="#fff" stroke-width="1" fill="none"/>
<rect x="403.0" y="416.0" width="3" height="3" fill="#fff"/>
<path d="M544.5,388 L544.5,461.5 L476.5,461.5 L476.5,467" stroke="#fff" stroke-width="1" fill="none"/>
<path d="M620.5,388 V467" stroke="#fff" stroke-width="1" fill="none"/>
<use href="#sepG" transform="translate(301,467)"/>
<use href="#sepG" transform="translate(381,467)"/>
<use href="#sepG" transform="translate(453,467)"/>
<use href="#sepG" transform="translate(597,467)"/>
<use href="#sepG" transform="translate(685,467)"/>
<text x="281.4" y="480.3" font-family="Liberation Sans" font-size="13" font-weight="normal" fill="#fff" letter-spacing="1.2" stroke="#fff" stroke-width="0.35">335</text>
<text x="361.4" y="480.3" font-family="Liberation Sans" font-size="13" font-weight="normal" fill="#fff" letter-spacing="1.2" stroke="#fff" stroke-width="0.35">347</text>
<text x="433.4" y="480.3" font-family="Liberation Sans" font-size="13" font-weight="normal" fill="#fff" letter-spacing="1.2" stroke="#fff" stroke-width="0.35">334</text>
<text x="577.4" y="480.3" font-family="Liberation Sans" font-size="13" font-weight="normal" fill="#fff" letter-spacing="1.2" stroke="#fff" stroke-width="0.35">348</text>
<text x="665.4" y="480.3" font-family="Liberation Sans" font-size="13" font-weight="normal" fill="#fff" letter-spacing="1.2" stroke="#fff" stroke-width="0.35">336</text>
<use href="#mon" transform="translate(688,281)"/>
<use href="#gbox" transform="translate(703,280)"/>
<text x="694.4" y="317.3" font-family="Liberation Sans" font-size="13" font-weight="normal" fill="#fff" letter-spacing="1.2" stroke="#fff" stroke-width="0.35">344</text>
<use href="#scA" transform="translate(683,323)"/>
<path d="M709.5,338 V467" stroke="#fff" stroke-width="1" fill="none"/>
<text x="666.4" y="361.3" font-family="Liberation Sans" font-size="13" font-weight="normal" fill="#fff" letter-spacing="1.2" stroke="#fff" stroke-width="0.35">373</text>
<use href="#scA" transform="translate(655,368)"/>
<path d="M680.5,382 L680.5,397.5 L709.5,397.5" stroke="#fff" stroke-width="1" fill="none"/>
<rect x="708.0" y="396.0" width="3" height="3" fill="#fff"/>
<text x="721.4" y="361.3" font-family="Liberation Sans" font-size="13" font-weight="normal" fill="#fff" letter-spacing="1.2" stroke="#fff" stroke-width="0.35">339</text>
<use href="#elC" transform="translate(725,368)"/>
<path d="M750.5,397 L750.5,457.5 L709.5,457.5" stroke="#fff" stroke-width="1" fill="none"/>
<rect x="708.0" y="456.0" width="3" height="3" fill="#fff"/>
<use href="#gbox" transform="translate(651,406)"/>
<use href="#mon" transform="translate(689,407)"/>
<use href="#mon" transform="translate(725,426)"/>
<use href="#gbox" transform="translate(739,426)"/>
<text x="803.4" y="342.3" font-family="Liberation Sans" font-size="13" font-weight="normal" fill="#fff" letter-spacing="1.2" stroke="#fff" stroke-width="0.35">232</text>
<use href="#scA" transform="translate(792,349)"/>
<use href="#mon" transform="translate(845,349)"/>
<use href="#gbox" transform="translate(859,349)"/>
<path d="M818.5,364 V383" stroke="#fff" stroke-width="1" fill="none"/>
<use href="#sepG" transform="translate(797,383)"/>
<text x="777.4" y="396.3" font-family="Liberation Sans" font-size="13" font-weight="normal" fill="#fff" letter-spacing="1.2" stroke="#fff" stroke-width="0.35">337</text>
<path d="M809.5,428 V493" stroke="#fff" stroke-width="1" fill="none"/>
<path d="M829.5,428 V520" stroke="#fff" stroke-width="1" fill="none"/>
<text x="791.5" y="504.5" font-family="Liberation Serif" font-size="10.5" font-weight="bold" fill="#fff">в</text>
<text x="799" y="504" font-family="Liberation Sans" font-size="12" font-weight="normal" fill="#fff" >342</text>
<text x="929.4" y="333.3" font-family="Liberation Sans" font-size="13" font-weight="normal" fill="#fff" letter-spacing="1.2" stroke="#fff" stroke-width="0.35">372</text>
<use href="#elC" transform="translate(931,340)"/>
<use href="#mon" transform="translate(960,348)"/>
<use href="#gbox" transform="translate(975,348)"/>
<path d="M957.5,369 V399" stroke="#fff" stroke-width="1" fill="none"/>
<use href="#tilt" transform="translate(925,399)"/>
<text x="891.4" y="415.3" font-family="Liberation Sans" font-size="13" font-weight="normal" fill="#fff" letter-spacing="1.2" stroke="#fff" stroke-width="0.35">371</text>
<use href="#mon" transform="translate(872,424)"/>
<use href="#gbox" transform="translate(887,424)"/>
<path d="M980.5,443 V450" stroke="#fff" stroke-width="1" fill="none"/>
<use href="#scB" transform="translate(998,450) scale(-1,1)"/>
<text x="959.4" y="487.3" font-family="Liberation Sans" font-size="13" font-weight="normal" fill="#fff" letter-spacing="1.2" stroke="#fff" stroke-width="0.35">373</text>
<use href="#gbox" transform="translate(833,479)"/>
<use href="#mon" transform="translate(871,480)"/>
<text x="892.4" y="492.3" font-family="Liberation Sans" font-size="13" font-weight="normal" fill="#fff" letter-spacing="1.2" stroke="#fff" stroke-width="0.35">228</text>
<use href="#scA" transform="translate(929,499) scale(-1,1)"/>
<path d="M901.5,514 V520" stroke="#fff" stroke-width="1" fill="none"/>
<rect x="824.5" y="520.5" width="108" height="36" fill="#0ff" stroke="#000"/>
<path d="M897.5,520.5 V556.5" stroke="#000" stroke-width="1" fill="none"/>
<rect x="828.5" y="524.5" width="9" height="5" fill="none" stroke="#000"/>
<rect x="828.5" y="547.5" width="9" height="5" fill="none" stroke="#000"/>
<rect x="849.5" y="531.5" width="31" height="17" fill="none" stroke="#2aa0a0"/>
<text x="852.5" y="545.5" font-family="Liberation Sans" font-size="14" font-weight="normal" fill="#fff" stroke="#fff" stroke-width="0.3">Б30</text>
<path d="M824.5,556.5 H861 L855,571.5 H833 Z" fill="#0ff" stroke="#000"/>
<path d="M861,556.5 H897.5 L891,571.5 H869 Z" fill="#0ff" stroke="#000"/>
<path d="M897.5,556.5 H932.5 L927,571.5 H904 Z" fill="#0ff" stroke="#000"/>
<rect x="825.5" y="572.5" width="108" height="36" fill="#0ff" stroke="#000"/>
<path d="M825.5,594.5 H933.5" stroke="#000" stroke-width="1" fill="none"/>
<text x="833" y="586.5" font-family="Liberation Sans" font-size="9" fill="#000" letter-spacing="2" stroke="#000" stroke-width="0.2">PUBU</text>
<rect x="867" y="598" width="28" height="1.6" fill="#000"/>
<rect x="825.5" y="608.5" width="28" height="14" fill="#0ff" stroke="#000"/>
<rect x="833.0" y="611" width="13" height="3" fill="#000"/>
<rect x="866.5" y="608.5" width="28" height="14" fill="#0ff" stroke="#000"/>
<rect x="874.0" y="611" width="13" height="3" fill="#000"/>
<rect x="905.5" y="608.5" width="28" height="14" fill="#0ff" stroke="#000"/>
<rect x="913.0" y="611" width="13" height="3" fill="#000"/>
<text x="793.4" y="590.3" font-family="Liberation Sans" font-size="13" font-weight="normal" fill="#fff" letter-spacing="1.2" stroke="#fff" stroke-width="0.35">230</text>
<path d="M836.5,623 L836.5,637.5 L871.5,637.5 L871.5,623" stroke="#fff" stroke-width="1" fill="none"/>
<path d="M853.5,637.5 V642" stroke="#fff" stroke-width="1" fill="none"/>
<rect x="852.0" y="636.0" width="3" height="3" fill="#fff"/>
<path d="M844.5,623 L844.5,629.5 L890.5,629.5" stroke="#fff" stroke-width="1" fill="none"/>
<path d="M890.5,623 V691" stroke="#fff" stroke-width="1" fill="none"/>
<rect x="889.0" y="628.0" width="3" height="3" fill="#fff"/>
<path d="M912.5,623 V641" stroke="#fff" stroke-width="1" fill="none"/>
<path d="M924.5,623 L924.5,629.5 L954.5,629.5 L954.5,691" stroke="#fff" stroke-width="1" fill="none"/>
<use href="#scB" transform="translate(838,642)"/>
<use href="#scB" transform="translate(897,641)"/>
<use href="#scB" transform="translate(875,691)"/>
<use href="#scB" transform="translate(939,691)"/>
<text x="842.4" y="681.3" font-family="Liberation Sans" font-size="13" font-weight="normal" fill="#fff" letter-spacing="1.2" stroke="#fff" stroke-width="0.35">228</text>
<text x="902.4" y="680.3" font-family="Liberation Sans" font-size="13" font-weight="normal" fill="#fff" letter-spacing="1.2" stroke="#fff" stroke-width="0.35">420</text>
<text x="880.4" y="730.3" font-family="Liberation Sans" font-size="13" font-weight="normal" fill="#fff" letter-spacing="1.2" stroke="#fff" stroke-width="0.35">351</text>
<text x="944.4" y="730.3" font-family="Liberation Sans" font-size="13" font-weight="normal" fill="#fff" letter-spacing="1.2" stroke="#fff" stroke-width="0.35">123</text>
<use href="#gbox" transform="translate(765,607)"/>
<use href="#mon" transform="translate(803,608)"/>
<text x="785.4" y="645.3" font-family="Liberation Sans" font-size="13" font-weight="normal" fill="#fff" letter-spacing="1.2" stroke="#fff" stroke-width="0.35">123</text>
<use href="#scA" transform="translate(821,651) scale(-1,1)"/>
<path d="M795.5,665 L795.5,689.5 L785,689.5" stroke="#fff" stroke-width="1" fill="none"/>
<path d="M709.5,518 V521" stroke="#fff" stroke-width="1" fill="none"/>
<path d="M697,526 L702,521 H728 L722,526 Z" fill="#4a9e9e"/>
<rect x="697" y="526" width="25" height="43" fill="#55c4c4"/>
<path d="M722,526 L728,521 V565 L722,569 Z" fill="#5fe0e0"/>
<path d="M697,569 H722 L728,565 V566 L710,573 Z" fill="#4aa8a8"/>
<rect x="706.5" y="532.5" width="7" height="4.5" fill="#0ff" stroke="#000"/>
<path d="M709.5,573 V577" stroke="#fff" stroke-width="1" fill="none"/>
<use href="#tilt" transform="translate(672,577)"/>
<text x="643.4" y="593.3" font-family="Liberation Sans" font-size="13" font-weight="normal" fill="#fff" letter-spacing="1.2" stroke="#fff" stroke-width="0.35">231</text>
<use href="#gbox" transform="translate(687,622)"/>
<use href="#mon" transform="translate(692,639)"/>
<use href="#tilt" transform="translate(705,630)"/>
<text x="723.4" y="689.3" font-family="Liberation Sans" font-size="13" font-weight="normal" fill="#fff" letter-spacing="1.2" stroke="#fff" stroke-width="0.35">175</text>
<path d="M724.5,621 V629" stroke="#fff" stroke-width="1" fill="none"/>
<path d="M620.5,650 L620.5,606.5 L672,606.5" stroke="#fff" stroke-width="1" fill="none"/>
<path d="M672,613.5 L660.5,613.5 L660.5,693.5" stroke="#fff" stroke-width="1" fill="none"/>
<path d="M564.5,688 L564.5,693.5 L712.5,693.5 L712.5,674" stroke="#fff" stroke-width="1" fill="none"/>
<rect x="659.0" y="692.0" width="3" height="3" fill="#fff"/>
<path d="M759.5,674 V698" stroke="#fff" stroke-width="1" fill="none"/>
<use href="#scD" transform="translate(739,673)"/>
<use href="#gbox" transform="translate(677,703)"/>
<use href="#mon" transform="translate(715,704)"/>
<text x="740.4" y="729.3" font-family="Liberation Sans" font-size="13" font-weight="normal" fill="#fff" letter-spacing="1.2" stroke="#fff" stroke-width="0.35">632</text>
<g stroke="#000" stroke-width="1"><use href="#spV" x="632.5" y="626"/><path d="M632.5,663.5 V642 L641.5,639 V663.5 Z" fill="#0ff"/><path d="M621.5,653.5 H632.5 V663.5 H626.5 Z" fill="#0ff"/><rect x="630.5" y="663.5" width="14" height="3" fill="#0ff"/><path d="M637,656 L639.5,658.5 L637,661 L634.5,658.5 Z" fill="none"/></g>
<text x="626.4" y="684.3" font-family="Liberation Sans" font-size="13" font-weight="normal" fill="#fff" letter-spacing="1.2" stroke="#fff" stroke-width="0.35">372</text>
<use href="#scD" transform="translate(586,673) scale(-1,1)"/>
<text x="559.4" y="729.3" font-family="Liberation Sans" font-size="13" font-weight="normal" fill="#fff" letter-spacing="1.2" stroke="#fff" stroke-width="0.35">739</text>
<use href="#mon" transform="translate(593,707)"/>
<use href="#gbox" transform="translate(607,706)"/>
<path d="M552.5,533.5 V546" stroke="#fff" stroke-width="1" fill="none"/>
<use href="#scB" transform="translate(570,546) scale(-1,1)"/>
<text x="531.4" y="584.3" font-family="Liberation Sans" font-size="13" font-weight="normal" fill="#fff" letter-spacing="1.2" stroke="#fff" stroke-width="0.35">342</text>
<use href="#mon" transform="translate(516,595)"/>
<use href="#gbox" transform="translate(533,594)"/>
<path d="M600.5,579 L600.5,545.5 L620.5,545.5 L620.5,518" stroke="#fff" stroke-width="1" fill="none"/>
<use href="#scD" transform="translate(577,556)"/>
<text x="578.4" y="612.3" font-family="Liberation Sans" font-size="13" font-weight="normal" fill="#fff" letter-spacing="1.2" stroke="#fff" stroke-width="0.35">647</text>
<use href="#mon" transform="translate(569,623)"/>
<use href="#gbox" transform="translate(583,622)"/>
<path d="M336.5,518 L336.5,533.5 L608.5,533.5 L608.5,518" stroke="#fff" stroke-width="1" fill="none"/>
<path d="M412.5,518 V533.5" stroke="#fff" stroke-width="1" fill="none"/>
<rect x="411.0" y="532.0" width="3" height="3" fill="#fff"/>
<path d="M484.5,518 V533.5" stroke="#fff" stroke-width="1" fill="none"/>
<rect x="483.0" y="532.0" width="3" height="3" fill="#fff"/>
<rect x="551.0" y="532.0" width="3" height="3" fill="#fff"/>
<path d="M324.5,513 V579" stroke="#fff" stroke-width="1" fill="none"/>
<path d="M404.5,513 V579" stroke="#fff" stroke-width="1" fill="none"/>
<path d="M476.5,513 V579" stroke="#fff" stroke-width="1" fill="none"/>
<use href="#scD" transform="translate(301,556)"/>
<use href="#scD" transform="translate(381,556)"/>
<use href="#scD" transform="translate(453,556)"/>
<text x="301.4" y="612.3" font-family="Liberation Sans" font-size="13" font-weight="normal" fill="#fff" letter-spacing="1.2" stroke="#fff" stroke-width="0.35">621</text>
<text x="381.4" y="612.3" font-family="Liberation Sans" font-size="13" font-weight="normal" fill="#fff" letter-spacing="1.2" stroke="#fff" stroke-width="0.35">631</text>
<text x="453.4" y="612.3" font-family="Liberation Sans" font-size="13" font-weight="normal" fill="#fff" letter-spacing="1.2" stroke="#fff" stroke-width="0.35">619</text>
<use href="#mon" transform="translate(301,623)"/>
<use href="#gbox" transform="translate(315,622)"/>
<use href="#mon" transform="translate(377,623)"/>
<use href="#gbox" transform="translate(391,622)"/>
<use href="#mon" transform="translate(449,623)"/>
<use href="#gbox" transform="translate(463,622)"/>
<use href="#fan" transform="translate(221,355)"/>
<text x="221.4" y="347.3" font-family="Liberation Sans" font-size="13" font-weight="normal" fill="#fff" letter-spacing="1.2" stroke="#fff" stroke-width="0.35">358</text>
<use href="#fan" transform="translate(221,455)"/>
<text x="221.4" y="447.3" font-family="Liberation Sans" font-size="13" font-weight="normal" fill="#fff" letter-spacing="1.2" stroke="#fff" stroke-width="0.35">117</text>
<use href="#fan" transform="translate(221,570)"/>
<text x="222.4" y="563.3" font-family="Liberation Sans" font-size="13" font-weight="normal" fill="#fff" letter-spacing="1.2" stroke="#fff" stroke-width="0.35">118</text>
<text x="20.5" y="538" font-family="Liberation Sans" font-size="12" font-weight="bold" fill="#fff" letter-spacing="0.3">из отволожки</text>
<path d="M58.5,543 V553" stroke="#fff" stroke-width="1" fill="none"/>
<use href="#scB" transform="translate(42,553)"/>
<text x="47.4" y="589.3" font-family="Liberation Sans" font-size="13" font-weight="normal" fill="#fff" letter-spacing="1.2" stroke="#fff" stroke-width="0.35">461</text>
<circle cx="102" cy="562" r="4.5" fill="#0ff" stroke="#000"/>
<text x="110.5" y="567.5" font-family="Liberation Sans" font-size="15" font-weight="bold" fill="#fff" >t</text>
<rect x="224.5" y="267.5" width="60" height="18" fill="#ece9d8" stroke="#808080"/>
<path d="M224.5,285.5 V267.5 H284.5" stroke="#fff" fill="none"/>
<text x="231" y="281" font-family="Liberation Sans" font-size="11" font-weight="bold" fill="#000" >РАБОТА</text>
<circle cx="160.5" cy="617.5" r="7" fill="#0ff" stroke="#000"/>
<path d="M155.5,612.5 L165.5,622.5 M165.5,612.5 L155.5,622.5" stroke="#000"/>
<text x="122.4" y="626.3" font-family="Liberation Sans" font-size="13" font-weight="normal" fill="#fff" letter-spacing="1.2" stroke="#fff" stroke-width="0.35">110</text>
<use href="#mon" transform="translate(172,613)"/>
<use href="#gbox" transform="translate(187,612)"/>
<path d="M160.5,625 V633" stroke="#b0c4de" stroke-width="1" fill="none"/>
<path d="M150,636.5 H213 M150,639.5 H213 M213.5,634 V644 M144.5,634 V643" stroke="#0ff" stroke-width="1"/>
<path d="M153,635.5 L155.5,634.5 L160,642.5 L158,643.5 L155,642 M165,635.5 L167.5,634.5 L172,642.5 L170,643.5 L167,642 M177,635.5 L179.5,634.5 L184,642.5 L182,643.5 L179,642 M189,635.5 L191.5,634.5 L196,642.5 L194,643.5 L191,642 M201,635.5 L203.5,634.5 L208,642.5 L206,643.5 L203,642 " stroke="#0ff" fill="none" stroke-width="1"/>
<circle cx="147.5" cy="638.5" r="3" fill="#0ff" stroke="#000"/>
<use href="#gbox" transform="translate(93,636)"/>
<use href="#mon" transform="translate(128,637)"/>
<text x="149.4" y="661.3" font-family="Liberation Sans" font-size="13" font-weight="normal" fill="#fff" letter-spacing="1.2" stroke="#fff" stroke-width="0.35">111</text>
<path d="M212.5,645 L212.5,655.5 L248.5,655.5" stroke="#b0c4de" stroke-width="1" fill="none"/>
<path d="M248.5,646 V698" stroke="#b0c4de" stroke-width="1" fill="none"/>
<text x="238.4" y="625.3" font-family="Liberation Sans" font-size="13" font-weight="normal" fill="#fff" letter-spacing="1.2" stroke="#fff" stroke-width="0.35">362</text>
<use href="#scA" transform="translate(275,632) scale(-1,1)"/>
<path d="M249.5,702.5 H256.5 V698.5 H267.5 V703.5 H274.5 V698.5 H283.5 V721.5 L279,726.5 H263 L257,713 Z" fill="#0ff" stroke="#000"/>
<rect x="260.5" y="700.5" width="5" height="5" fill="none" stroke="#000"/>
<circle cx="270.5" cy="710.5" r="2.5" fill="none" stroke="#000"/>
<rect x="267.5" y="716.5" width="6" height="4" fill="none" stroke="#000"/>
<path d="M264.5,660 V698" stroke="#0ff" stroke-width="1" fill="none"/><path d="M277.5,660 V698" stroke="#0ff" stroke-width="1" fill="none"/><path d="M264.5,662 L259.5,665 L261.5,670 H264.5" stroke="#0ff" fill="none" stroke-width="1"/><path d="M277.5,662 L282.5,665 L280.5,670 H277.5" stroke="#0ff" fill="none" stroke-width="1"/><path d="M264.5,674 L259.5,677 L261.5,682 H264.5" stroke="#0ff" fill="none" stroke-width="1"/><path d="M277.5,674 L282.5,677 L280.5,682 H277.5" stroke="#0ff" fill="none" stroke-width="1"/><path d="M264.5,686 L259.5,689 L261.5,694 H264.5" stroke="#0ff" fill="none" stroke-width="1"/><path d="M277.5,686 L282.5,689 L280.5,694 H277.5" stroke="#0ff" fill="none" stroke-width="1"/><path d="M262.5,698 H264.5" stroke="#0ff" stroke-width="1" fill="none"/><path d="M275.5,698 H277.5" stroke="#0ff" stroke-width="1" fill="none"/>
</g>
</svg>
<div id="sb"><div style="position:absolute;left:0;top:0;width:1024px;height:1px;background:#fff"></div>
<div class="pn" style="left:1px;width:170px"></div><div class="pn" style="left:171px;width:852px"></div>
<div style="position:absolute;left:0;top:32px;width:1024px;height:1px;background:#aca899"></div></div>
</body></html>
